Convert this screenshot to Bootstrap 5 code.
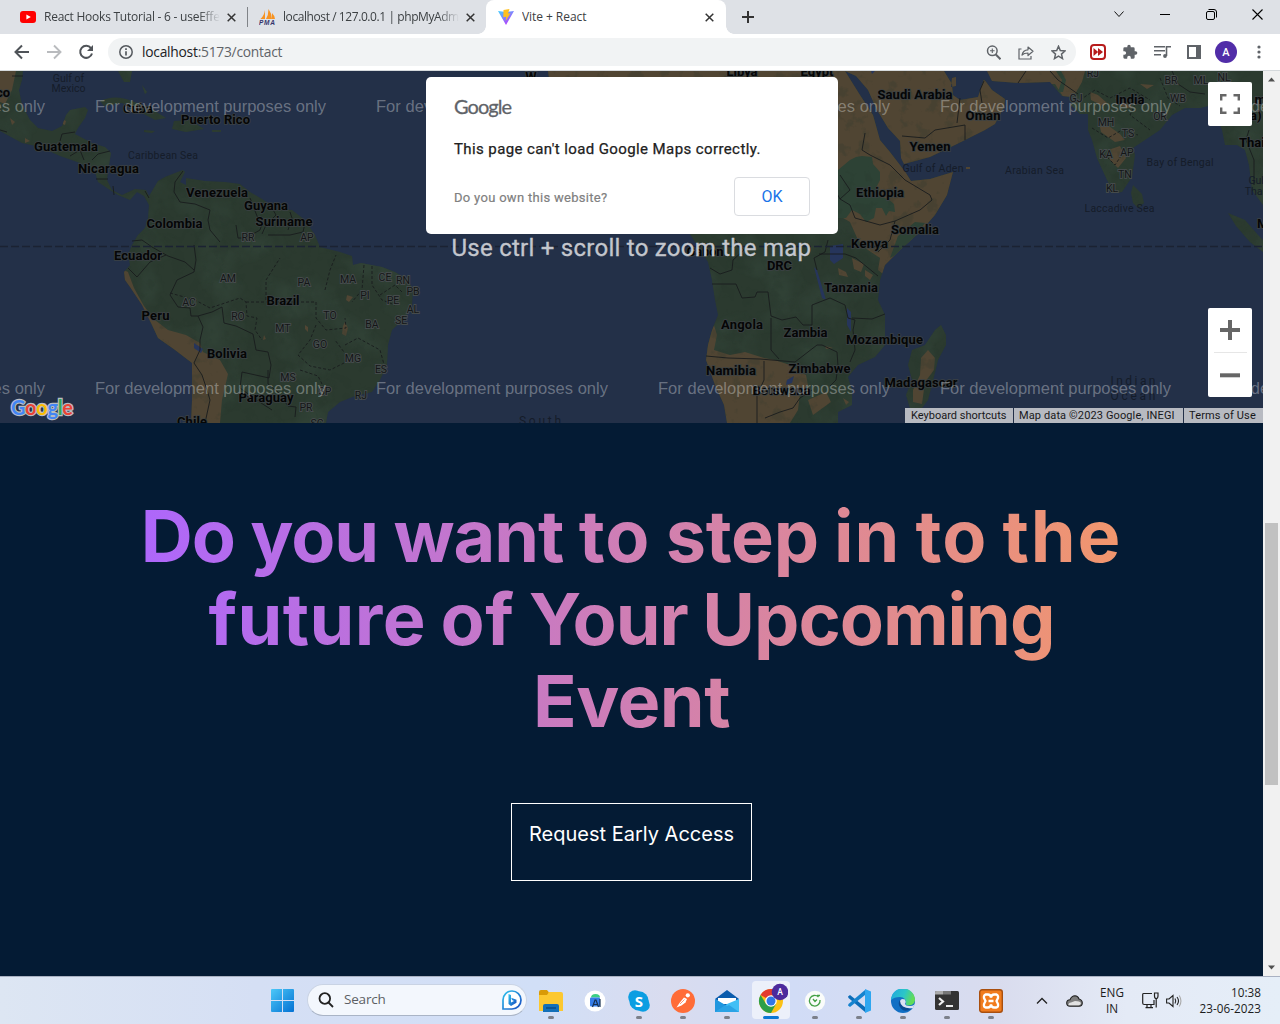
<!DOCTYPE html>
<html lang="en">
<head>
<meta charset="utf-8">
<meta name="viewport" content="width=device-width, initial-scale=1">
<title>Vite + React</title>
<link href="https://cdn.jsdelivr.net/npm/bootstrap@5.3.0/dist/css/bootstrap.min.css" rel="stylesheet">
<style>
body{width:1280px;height:1024px;overflow:hidden;font-family:"Open Sans","Noto Sans",sans-serif;background:#fff}
svg{display:block;flex:none}
.tabstrip{height:34px;background:#dee1e6;font-size:12px;color:#3c4043}
.tab-item{height:34px;white-space:nowrap}
.tab-label{overflow:hidden;line-height:34px}
.fade-end{-webkit-mask-image:linear-gradient(90deg,#000 88%,transparent);mask-image:linear-gradient(90deg,#000 88%,transparent)}
.tab-on{width:240px;background:#fff;border-radius:8px 8px 0 0;position:relative}
.tab-on::before,.tab-on::after{content:"";position:absolute;bottom:0;width:8px;height:8px}
.tab-on::before{left:-8px;background:radial-gradient(circle at 0 0,transparent 7.5px,#fff 8px)}
.tab-on::after{right:-8px;background:radial-gradient(circle at 100% 0,transparent 7.5px,#fff 8px)}
.tab-sep{width:1px;height:20px;background:#808388}
.toolbar{height:37px;border-bottom:1px solid #d5d9dc;background:#fff}
.omnibox{width:968px;height:28px;border-radius:14px;background:#f1f3f4;font-size:13.8px;color:#5f6368}
.omnibox b{font-weight:400;color:#202124}
.avatar{width:22px;height:22px;background:#512da8;color:#fff;font:500 11px Roboto,sans-serif}
.viewport-area{height:905px;background:#041b34}
.page-col{width:1263px}
.map-box{height:352px;position:relative;overflow:hidden;background:#233048}
.gm-dialog{position:absolute;left:426px;top:6px;width:412px;height:157px;background:#fff;border-radius:5px;padding:16px 28px 18px;font-family:Roboto,sans-serif}
.gm-brand{font:20px/26px Lato,sans-serif;color:#5f6368;letter-spacing:-.95px;-webkit-text-stroke:.3px #5f6368}
.gm-msg{font-size:15px;line-height:20px;color:#212121;letter-spacing:.4px;-webkit-text-stroke:.25px #212121}
.gm-own{font-size:13px;letter-spacing:.3px;color:#808080;-webkit-text-stroke:.2px #808080;padding-top:2px}
.gm-ok{width:76px;height:39px;border:1px solid #dadce0;border-radius:4px;background:#fff;color:#1a73e8;font-size:16px}
.gm-full{position:absolute;left:1208px;top:11px;width:44px;height:44px;background:#fff;border-radius:2px}
.gm-zoom{position:absolute;left:1208px;top:237px;width:44px;height:89px;background:#fff;border-radius:2px}
.gm-zoom i{height:1px;width:33px;background:#e6e6e6}
.gm-legal{position:absolute;right:0;bottom:0;height:15px;font:11px/15px Roboto,sans-serif;color:#17181a;gap:1px}
.gm-legal span{background:#b7bac1;white-space:nowrap;padding-left:6px}
.hero-title{margin-top:72px;font:700 72px/82.5px Inter,sans-serif;width:1003px;background:linear-gradient(90deg,#ae67fa 1.8%,#f49867 102.7%);-webkit-background-clip:text;background-clip:text;color:transparent;text-align:center}
.hero-line{display:block;white-space:nowrap;word-spacing:-1.3px;letter-spacing:-.55px}
.hero-line.second{word-spacing:-2px}
.k-tight{letter-spacing:-1px}
.k-wide{letter-spacing:1px}
.k-wider{letter-spacing:1.8px}
.k-soft{letter-spacing:.4px}
.k-snug{letter-spacing:-.3px}
.cta{width:241px;height:78px;border:1px solid #fff;color:#fff;margin-top:60px;padding-top:15px;font:400 20px/30px Inter,sans-serif;text-align:center;white-space:nowrap}
.scroll-col{width:17px;background:#f1f1f1}
.scroll-thumb{width:13px;height:262px;background:#c1c1c1;margin-top:441px}
.taskbar{height:48px;border-top:1px solid #a9b1c2;background:linear-gradient(90deg,#dde6f3,#d5dff4 20%,#d1dff7 42%,#d9dcef 52%,#d1dcf6 62%,#d9dcee 78%,#e4eaf6 88%,#e5eef8);color:#1b1b1b}
.pill{width:220px;height:32px;margin-top:-2px;border-radius:16px;background:#f3f7fd;border:1px solid #c9d3e4;border-bottom-color:#a9b4c6;font-size:13.5px;color:#5c5f64}
.app{width:44px;height:47px;position:relative}
.app::after{content:"";position:absolute;bottom:5px;left:19px;width:6px;height:3px;border-radius:2px;background:#7c808a}
.app.off::after{display:none}
.app.cur::before{content:"";position:absolute;left:3px;top:4px;width:38px;height:38px;border-radius:4px;background:#ecf0fa}
.app.cur::after{left:14px;width:16px;background:#0a78d4}
.app svg{position:relative}
.clock{font-size:11.7px;line-height:16px;letter-spacing:.05px;margin-top:-1px;white-space:nowrap}
</style>
<script src="https://cdn.jsdelivr.net/npm/bootstrap@5.3.0/dist/js/bootstrap.bundle.min.js"></script>
</head>
<body class="d-flex flex-column m-0">

<header class="tabstrip d-flex align-items-center">
  <div class="tab-item d-flex align-items-center" style="width:247px;padding-left:20px">
    <svg width="16" height="12" viewBox="0 0 16 12"><rect width="16" height="12" rx="3" fill="#f00"/><path d="M6.4 3.4v5.2L10.8 6z" fill="#fff"/></svg>
    <div class="tab-label fade-end ms-2" style="width:176px;letter-spacing:-.24px">React Hooks Tutorial - 6 - useEffect</div>
    <svg style="margin-left:7px" width="9" height="9" viewBox="0 0 9 9" stroke="#333" stroke-width="1.5"><path d="M.7.7l7.6 7.6M8.3.7L.7 8.3"/></svg>
  </div>
  <div class="tab-sep"></div>
  <div class="tab-item d-flex align-items-center" style="width:238px;padding-left:11px">
    <svg width="17" height="16" viewBox="0 0 17 16"><path d="M6 1v9H1.500Q5 7 6 1zM9.500 0Q13 5 13 10H7Q9.500 6 9.500 0zM13 4q3 3 3 6h-3z" fill="#f79322"/><text x="0" y="15.500" font-size="6.500" font-weight="bold" font-style="italic" font-family="Liberation Sans" fill="#34346b" textLength="16">PMA</text></svg>
    <div class="tab-label fade-end" style="width:176px;margin-left:7px;letter-spacing:-.42px">localhost / 127.0.0.1 | phpMyAdmin</div>
    <svg style="margin-left:7px" width="9" height="9" viewBox="0 0 9 9" stroke="#333" stroke-width="1.5"><path d="M.7.7l7.6 7.6M8.300.7L.7 8.300"/></svg>
  </div>
  <div class="tab-item tab-on d-flex align-items-center" style="padding-left:12px">
    <svg width="16" height="16" viewBox="0 0 16 16"><defs><linearGradient id="va" x1="0" y1="0" x2=".7" y2="1"><stop offset="0" stop-color="#41d1ff"/><stop offset="1" stop-color="#bd34fe"/></linearGradient></defs><path d="M0 2l8 1 8-1-8 14z" fill="url(#va)"/><path d="M5.500 1l6-1-1.500 4.500 2.500-.3L7.700 12l.6-4.300-3 .6z" fill="#ffc01f"/></svg>
    <div class="tab-label ms-2" style="width:183px;letter-spacing:-.06px">Vite + React</div>
    <svg width="9" height="9" viewBox="0 0 9 9" stroke="#333" stroke-width="1.5"><path d="M.7.7l7.6 7.6M8.300.7L.7 8.300"/></svg>
  </div>
  <svg style="margin-left:16px" width="12" height="12" viewBox="0 0 12 12" stroke="#333" stroke-width="2"><path d="M6 0v12M0 6h12"/></svg>
  <div class="ms-auto d-flex align-items-center" style="padding-right:17px;margin-top:-6px">
    <svg width="12" height="12" viewBox="0 0 12 12" fill="none" stroke="#111"><path d="M1.500 3.500L6 8.500l4.500-5"/></svg>
    <svg style="margin-left:35px" width="10" height="12" viewBox="0 0 10 12" stroke="#000"><path d="M0 6.500h10"/></svg>
    <svg style="margin-left:36px" width="11" height="11" viewBox="0 0 11 11" fill="none" stroke="#000"><rect x=".5" y="2.500" width="8" height="8" rx="1.500"/><path d="M2.500.5H8q2.500 0 2.500 2.500v5.500"/></svg>
    <svg style="margin-left:35px" width="11" height="11" viewBox="0 0 11 11" stroke="#000" stroke-width="1.100"><path d="M.5.5l10 10M10.500.5l-10 10"/></svg>
  </div>
</header>

<nav class="toolbar d-flex align-items-center">
  <svg style="margin-left:14px" width="16" height="16" viewBox="0 0 16 16" fill="none" stroke="#4f5358" stroke-width="2"><path d="M15 8H2M8 1.500L1.500 8 8 14.500"/></svg>
  <svg style="margin-left:16px" width="16" height="16" viewBox="0 0 16 16" fill="none" stroke="#b9bbbe" stroke-width="1.900"><path d="M1 8h13M8 1.500L14.500 8 8 14.500"/></svg>
  <svg style="margin-left:16px" width="16" height="16" viewBox="0 0 16 16" fill="none" stroke="#4f5358" stroke-width="2"><path d="M13 4.200A6 6 0 1 0 14 9.500"/><path d="M15 1v6H9z" fill="#4f5358" stroke="none"/></svg>
  <div class="omnibox d-flex align-items-center" style="margin-left:14px;padding:0 10px 0 11px">
    <svg width="14" height="14" viewBox="0 0 14 14" fill="none" stroke="#55595e" stroke-width="1.500"><circle cx="7" cy="7" r="6.200"/><path d="M7 6.200v4.300M7 3.300v1.600" stroke-width="1.700"/></svg>
    <span style="margin-left:9px;letter-spacing:-.24px"><b>localhost</b>:5173/contact</span>
    <div class="ms-auto d-flex align-items-center" style="gap:17px">
      <svg width="15" height="15" viewBox="0 0 15 15" fill="none" stroke="#5f6368" stroke-width="1.500"><circle cx="6.300" cy="5.800" r="4.800"/><path d="M9.800 9.500l4.700 4.700" stroke-width="2"/><path d="M4 5.800h4.600M6.300 3.500v4.600" stroke-width="1.100"/></svg>
      <svg width="16" height="15" viewBox="0 0 16 15" fill="none" stroke="#5f6368" stroke-width="1.200"><path d="M3.500 4H1v10h12v-3"/><path d="M4 10q1-5 6-5.200V2l5 4.300-5 4.200V8Q6 8 4 10z" stroke-linejoin="round"/></svg>
      <svg width="15" height="15" viewBox="0 0 15 15" fill="none" stroke="#5f6368" stroke-width="1.500"><path d="M7.500 1.300l1.800 4.300 4.700.4-3.500 3.100 1 4.500-4-2.400-4 2.400 1-4.500L1 6l4.700-.4z"/></svg>
    </div>
  </div>
  <svg style="margin-left:14px" width="16" height="16" viewBox="0 0 16 16"><rect x="1" y="1" width="14" height="14" rx="3" fill="#fff" stroke="#b71c1c" stroke-width="2"/><path d="M3.500 4l4.700 4-4.700 4zM8 4l5 4-5 4z" fill="#b71c1c"/></svg>
  <svg style="margin-left:16px" width="16" height="16" viewBox="0 0 24 24" fill="#5f6368"><path d="M20.500 11H19V7a2 2 0 0 0-2-2h-4V3.500a2.500 2.500 0 0 0-5 0V5H4a2 2 0 0 0-2 2v3.800h1.500a2.700 2.700 0 0 1 0 5.400H2V20a2 2 0 0 0 2 2h3.800v-1.500a2.700 2.700 0 0 1 5.400 0V22H17a2 2 0 0 0 2-2v-4h1.500a2.500 2.500 0 0 0 0-5z"/></svg>
  <svg style="margin-left:16px" width="17" height="14" viewBox="0 0 17 14" fill="none" stroke="#5f6368" stroke-width="1.600"><path d="M0 1.800h11M0 5.800h11M0 9.800h7M12.500 11V1.800H17"/><circle cx="11" cy="11" r="1.900" fill="#5f6368" stroke="none"/></svg>
  <svg style="margin-left:16px" width="14" height="14" viewBox="0 0 14 14"><path d="M0 0h14v14H0zM2 2v10h7V2z" fill="#5f6368" fill-rule="evenodd"/></svg>
  <div class="avatar rounded-circle d-flex align-items-center justify-content-center" style="margin-left:14px">A</div>
  <svg style="margin-left:20px" width="4" height="14" viewBox="0 0 4 14" fill="#5f6368"><circle cx="2" cy="2" r="1.600"/><circle cx="2" cy="7" r="1.600"/><circle cx="2" cy="12" r="1.600"/></svg>
</nav>

<main class="viewport-area d-flex">
  <div class="page-col d-flex flex-column align-items-center">
    <section class="map-box w-100">
      <svg width="1263" height="352" viewBox="0 71 1263 352">
        <defs>
          <path id="land" d="M0 71H23L22 80 19 90 22 105 30 120 38 128 52 131 62 126 66 115 70 110 85 107 88 110 85 118 78 128 75 134 92 143 105 147 111 153 109 165 107 180 112 190 122 195 135 189 146 190 149 196 158 181 165 177 175 173 183 170 185 172 180 182 186 185 186 178 205 181 225 182 240 184 250 192 262 199 275 208 292 210 305 220 315 235 320 247 340 252 352 256 353 265 361 263 382 267 395 272 408 280 413 290 412 305 405 318 392 330 388 345 387 365 380 380 372 392 355 396 340 402 328 412 326 423H191L192 400 192 363 175 350 158 338 152 325 142 305 130 287 125 280 124 272 130 265 128 255 132 245 138 235 145 228 148 218 149 205 144 196 137 192 130 200 118 195 110 190 98 182 95 172 80 163 60 156 40 147 22 143 0 131Z
          M118 71H132L130 82 124 82ZM100 101Q115 94 132 101L150 108 166 118 155 120 140 112 122 103 104 106ZM174 121L190 120 204 129 186 132 172 129ZM144 130L155 131 152 133 144 132ZM212 130H221V132H212ZM142 85L147 92 145 94Z
          M548 71H845L860 95 873 115 880 140 890 152 900 165 906 173 911 181 930 179 953 172 947 195 935 215 920 232 900 250 885 265 880 280 878 300 885 315 885 345 875 357 858 365 848 377 852 390 852 405 838 412 838 423H727L724 405 715 385 706 360 708 345 712 330 718 315 715 300 712 280 708 262 700 250 690 234 680 200 560 160Z
          M845 71L856 76 868 90 877 110 888 128 900 141 901 158 904 164 930 157 955 145 965 140 985 130 995 124 1004 107 1005 99 992 90 984 79 978 97 960 100 953 95 952 84 944 71Z
          M952 78L956 77 956 86 951 87ZM987 71L992 81 1018 83 1050 82 1062 96 1073 97 1071 105 1080 114 1088 114 1088 130 1092 140 1097 158 1107 180 1114 193 1122 192 1132 177 1135 155 1133 148 1145 140 1160 130 1172 115 1185 108 1200 108 1212 105 1222 130 1225 145 1237 145 1245 150 1249 165 1252 190 1263 205V71Z
          M1133 185L1142 194 1144 203 1138 208 1133 203 1131 193ZM1228 213L1245 220 1258 235 1263 240V252L1250 242 1236 226Z
          M941 325L946 335 946 345 938 360 932 385 928 400 922 408 910 408 906 395 912 380 908 365 912 350 925 345 935 330Z"/>
          <clipPath id="lc"><use href="#land"/></clipPath>
          <filter id="mot" x="0" y="0" width="100%" height="100%" color-interpolation-filters="sRGB"><feTurbulence type="fractalNoise" baseFrequency=".025" numOctaves="4" seed="8"/><feColorMatrix values="0 0 0 0 .20  0 0 0 0 .27  0 0 0 0 .225  3 0 0 0 -1.3"/></filter>
          <filter id="spk" x="0" y="0" width="100%" height="100%" color-interpolation-filters="sRGB"><feTurbulence type="fractalNoise" baseFrequency=".07" numOctaves="4" seed="3"/><feColorMatrix values="0 0 0 0 .16  0 0 0 0 .22  0 0 0 0 .18  8 0 0 0 -4.6"/></filter>
        </defs>
        <rect y="71" width="1263" height="352" fill="#233048"/>
        <use href="#land" fill="#2b3a2f"/>
        <g clip-path="url(#lc)">
          <rect y="71" width="1263" height="352" filter="url(#mot)" opacity=".65"/>
          <g fill="#504533">
            <path d="M0 71H16L12 90 5 104 0 102ZM124 270L128 272 134 288 144 306 155 320 168 330 186 335 200 343 203 352 220 360 228 374 222 400 220 423H185V360L150 338 124 300Z"/>
            <path d="M540 71H960L1010 90 1005 130 905 168 955 172 940 225 895 262 888 278 878 270 880 258 868 250 858 240 850 222 838 215V100H560ZM985 71H1085L1082 82 1074 96 1064 98 1055 84 990 84Z"/>
            <path d="M714 325L717 335 714 350 730 355 745 352 764 358 775 360 790 365 806 375 808 385 800 393 798 410 790 423H722L700 360ZM928 350L935 358 934 370 925 382 922 404 913 402 913 390 920 375 921 358Z"/>
            <path d="M345 322l3 6-2 8-4-2 1-8zM347 295l6 2-4 5-3-2zM305 325l3 2 0 5-3-3zM264 335l2 4-3 1zM60 118l6 3-1 4-5-2zM10 118l5 4-3 3zM25 138l5 3-5 2z"/>
            <path d="M1098 118l8 6 14 10 5 6-10 2-14-10zM1108 150l12-4 6 12-8 10-8-8zM1090 92l8 3 9 8-4 3-12-6zM1140 84l14 1-7 4zM1115 98l10 3 8 8-12-3z"/>
            <path d="M838 268l8 4 2 5-9-2zM852 258l12 6-3 8-7-3zM865 270l8 5-3 5-5-4zM808 400l18-8 5 10-18 13zM843 398l6 4-3 3zM825 346l8 2-7 1z"/>
          </g>
          <g fill="#2d4235">
            <path d="M838 170L850 160 856 157 862 156 872 157 873 164 880 172 880 180 876 188 880 197 888 199 894 204 895 212 889 211 886 216 882 208 876 208 874 218 866 222 860 214 852 210 846 218 838 218ZM905 250L925 223 915 222 898 236 890 258ZM1056 71L1062 80 1058 92 1063 92 1066 80 1061 71Z"/>
          </g>
          <rect x="120" y="71" width="1143" height="352" filter="url(#spk)" opacity=".22"/>
          <g fill="#26355b"><path d="M830 246L843 244 843 258 834 264 830 260ZM814 267L817 270 826 300 822 298ZM847 308L851 312 851 332 847 325ZM194 343L203 349 201 353 194 348ZM787 380l7-4-2 7-6 2zM870 68L875 71 872 74Z"/></g>
        </g>
        <path d="M966 167h4v2h-4z" fill="#504533"/>
        <g fill="none" stroke="#181c1d" stroke-width=".9" stroke-linejoin="round">
          <path d="M183 171L175 182 174 192 180 202 195 204 210 210 208 220 210 230 220 242M132 241L142 240 152 247 168 256 185 262 194 270M128 268L137 277 150 262 166 255M194 245L196 260 194 272 177 280 170 295 178 307 190 308 191 316 198 316 203 327 200 340 200 350 194 363 202 375 207 390 210 400 205 423M198 316L212 312 222 307 224 323 236 326 253 334 256 350 268 352 271 365 269 378 242 372 240 388 258 401 272 410M268 370L268 384 278 392 288 406 296 407 295 417M236 225L238 238 246 238 260 230 262 224 257 216 250 198M272 208L276 215 266 225 262 234M290 212L292 218 288 230M305 223L303 232 290 235 268 235M60 141L62 134 75 132M70 156L80 150 84 160M92 160L98 154 110 151M96 179H108M113 186L114 195M145 191L149 198M0 130l7 2M12 76h11"/>
          <path d="M712 284L736 284 742 298 755 297 757 292 768 292 771 316 782 320 796 317 803 325 812 325 812 305 830 298 845 305 848 318 855 320M771 318V350L779 359M706 356L728 358 760 359 795 362 817 345 822 345 837 352 838 366 836 380 830 386M764 361V380L757 395 757 423M765 418L780 412 793 408 800 398 812 390M852 318L872 319 885 314M819 254H845L856 258 878 276M817 270L814 258 825 252 828 240M855 320L853 330 855 350 850 362M710 268L720 274 732 270 733 260 744 250 735 240M840 175L850 190 840 199 850 205 855 218 880 225 895 221M870 155L890 165 900 175 905 180 930 195 932 200 920 210 895 221 890 240 878 252M865 133L862 150 870 155M835 190l5 9M902 136L925 138 935 130 965 125 965 140M957 123L960 98M984 81L980 90 982 103M1050 71L1058 80 1078 94M1018 83L1026 71M1172 71L1178 84 1190 92 1205 94M1249 130L1246 140 1254 160 1254 185"/>
          <path stroke-dasharray="3 2" d="M170 293L195 300 210 308 222 304 240 298 246 302 247 316 257 318 255 330 262 340M246 302H316L316 318 326 330 346 328 345 318M266 300L266 280 280 258M325 290L330 270 336 255M364 265L362 290 352 302M372 266V285L382 300 395 305M316 325L310 340 298 355 310 366 330 370 350 360 335 340M380 295L395 285 402 292M345 345L358 338 380 350 385 368M300 370L318 376 325 390M1080 100L1095 90 1110 98 1130 88 1150 100M1092 128L1108 138 1122 130 1138 135M1100 150L1115 165 1125 150M1160 78L1168 98 1180 106M1140 95l-10 20 20 15"/>
        </g>
        <path d="M0 246.500H1263" stroke="#1b2232" stroke-width="1.500" stroke-dasharray="8 3"/>

        <g font-family="Roboto,sans-serif" font-size="10.500" fill="#151c29" text-anchor="middle">
          <text x="68.500" y="82">Gulf of</text><text x="68.500" y="92">Mexico</text><text x="163" y="159" textLength="70">Caribbean Sea</text>
          <text x="933" y="172" textLength="61">Gulf of Aden</text><text x="1034.500" y="174" textLength="59">Arabian Sea</text><text x="1180" y="165.500" textLength="67">Bay of Bengal</text><text x="1119.500" y="212" textLength="70">Laccadive Sea</text><text x="1258" y="184">Gulf</text><text x="1259" y="195">Thaila</text>
          <text x="1133" y="385" font-size="12" textLength="45">Indian</text><text x="1133" y="400" font-size="12" textLength="45">Ocean</text><text x="540" y="425" font-size="12" textLength="42">South</text>
        </g>
        <g font-family="Roboto,sans-serif" font-size="10.500" fill="#141617" stroke="#454b4c" stroke-width="1.800" paint-order="stroke" text-anchor="middle">
          <text x="248" y="241">RR</text><text x="307" y="241">AP</text><text x="228" y="282">AM</text><text x="304" y="286">PA</text><text x="348" y="283">MA</text><text x="385" y="281">CE</text><text x="403" y="284">RN</text><text x="413" y="295">PB</text><text x="365" y="299">PI</text><text x="393" y="304">PE</text><text x="413" y="313">AL</text><text x="401" y="324">SE</text><text x="189" y="306">AC</text><text x="238" y="320">RO</text><text x="330" y="319">TO</text><text x="372" y="328">BA</text><text x="283" y="332">MT</text><text x="320" y="348">GO</text><text x="353" y="362">MG</text><text x="381" y="373">ES</text><text x="288" y="381">MS</text><text x="325" y="395">SP</text><text x="361" y="399">RJ</text><text x="306" y="411">PR</text><text x="317" y="427">SC</text>
          <text x="1093" y="77">RJ</text><text x="1171" y="84">BR</text><text x="1201" y="84">ML</text><text x="1224" y="81">NL</text><text x="1076" y="102">GJ</text><text x="1178" y="102">WB</text><text x="1160" y="120">OR</text><text x="1106" y="126">MH</text><text x="1128" y="137">TS</text><text x="1106" y="158">KA</text><text x="1127" y="156">AP</text><text x="1125" y="178">TN</text><text x="1112" y="192">KL</text>
        </g>
        <g font-family="Roboto,sans-serif" font-size="13" font-weight="700" fill="#050606" stroke="#3b4144" stroke-width="1.600" paint-order="stroke" text-anchor="middle" lengthAdjust="spacingAndGlyphs">
          <text x="3" y="97">co</text><text x="138" y="113">Cuba</text><text x="215.500" y="124" textLength="69">Puerto Rico</text><text x="66" y="151" textLength="64">Guatemala</text><text x="108.500" y="173" textLength="61">Nicaragua</text><text x="217" y="197" textLength="62">Venezuela</text><text x="266" y="210" textLength="44">Guyana</text><text x="284" y="226" textLength="57">Suriname</text><text x="174.500" y="228" textLength="56">Colombia</text><text x="138" y="260" textLength="48">Ecuador</text><text x="155.500" y="320" textLength="28">Peru</text><text x="283" y="305" textLength="33">Brazil</text><text x="227" y="358" textLength="40">Bolivia</text><text x="266" y="402" textLength="55">Paraguay</text><text x="192" y="426" textLength="30">Chile</text>
          <text x="531" y="81">W</text><text x="742" y="76">Libya</text><text x="817" y="76">Egypt</text><text x="915" y="99" textLength="75">Saudi Arabia</text><text x="983" y="120" textLength="35">Oman</text><text x="930" y="151" textLength="41">Yemen</text><text x="880" y="197" textLength="48">Ethiopia</text><text x="915" y="234" textLength="48">Somalia</text><text x="869.500" y="248" textLength="37">Kenya</text><text x="705" y="256" textLength="37">Gabon</text><text x="779.500" y="270" textLength="25">DRC</text><text x="851" y="292" textLength="54">Tanzania</text><text x="742" y="329" textLength="42">Angola</text><text x="805.500" y="337" textLength="44">Zambia</text><text x="884.500" y="344" textLength="77">Mozambique</text><text x="731" y="375" textLength="50">Namibia</text><text x="819.500" y="373" textLength="62">Zimbabwe</text><text x="781.500" y="395" textLength="58">Botswana</text><text x="921" y="387" textLength="73">Madagascar</text><text x="1130" y="104" textLength="29">India</text><text x="1266" y="104">mar</text><text x="1250" y="120" text-anchor="start">a)</text><text x="1239" y="147" text-anchor="start">Thailand</text><text x="1257" y="228" text-anchor="start">Ma</text>
        </g>
        <g font-family="Liberation Sans,sans-serif" font-size="16.500" fill="#fff" fill-opacity=".33">
          <text x="-187" y="112" textLength="232">For development purposes only</text><text x="95" y="112" textLength="231">For development purposes only</text><text x="376" y="112" textLength="232">For development purposes only</text><text x="658" y="112" textLength="232">For development purposes only</text><text x="940" y="112" textLength="231">For development purposes only</text><text x="1221.500" y="112" textLength="231">For development purposes only</text>
          <text x="-187" y="394" textLength="232">For development purposes only</text><text x="95" y="394" textLength="231">For development purposes only</text><text x="376" y="394" textLength="232">For development purposes only</text><text x="658" y="394" textLength="232">For development purposes only</text><text x="940" y="394" textLength="231">For development purposes only</text><text x="1221.500" y="394" textLength="231">For development purposes only</text>
        </g>
        <text x="451.500" y="256" font-family="Roboto,sans-serif" font-size="24" fill="#c3c6cd" stroke="#c3c6cd" stroke-width=".3" textLength="359.500">Use ctrl + scroll to zoom the map</text>
        <text x="11" y="415" font-family="Lato,sans-serif" font-size="20" font-weight="700" textLength="62" stroke="#b9bcc2" stroke-width="2.400" paint-order="stroke"><tspan fill="#4285f4">G</tspan><tspan fill="#ea4335">o</tspan><tspan fill="#fbbc04">o</tspan><tspan fill="#4285f4">g</tspan><tspan fill="#34a853">l</tspan><tspan fill="#ea4335">e</tspan></text>
      </svg>
      <div class="gm-legal d-flex"><span style="width:108px">Keyboard shortcuts</span><span style="width:169px;letter-spacing:.12px;padding-left:5px">Map data ©2023 Google, INEGI</span><span style="width:79px;letter-spacing:.15px;padding-left:5px">Terms of Use</span></div>
      <div class="gm-full d-flex align-items-center justify-content-center"><svg width="20" height="20" viewBox="0 0 20 20" fill="none" stroke="#666" stroke-width="2.400"><path d="M1.200 6.500V1.200h5.300M13.500 1.200h5.300v5.300M18.800 13.500v5.300h-5.300M6.500 18.800H1.200v-5.300"/></svg></div>
      <div class="gm-zoom d-flex flex-column align-items-center">
        <svg width="44" height="44" viewBox="0 0 44 44" stroke="#666" stroke-width="4"><path d="M12 22h20M22 12v20"/></svg><i></i>
        <svg width="44" height="44" viewBox="0 0 44 44" stroke="#666" stroke-width="4"><path d="M12 22.300h20"/></svg>
      </div>
      <div class="gm-dialog d-flex flex-column">
        <div class="gm-brand">Google</div>
        <div class="gm-msg" style="margin-top:20px">This page can't load Google Maps correctly.</div>
        <div class="d-flex align-items-center justify-content-between mt-auto">
          <span class="gm-own">Do you own this website?</span>
          <button class="gm-ok p-0">OK</button>
        </div>
      </div>
    </section>
    <h1 class="hero-title mb-0"><span class="hero-line"><span class="k-tight">Do</span> <span class="k-tight">you</span> <span class="k-tight">want</span> <span class="k-wide">to</span> <span class="k-snug">step</span> <span class="k-wide">in</span> <span class="k-wide">to</span> <span class="k-wider">the</span></span><span class="hero-line second"><span class="k-soft">future</span> <span class="k-soft">of</span> <span class="k-tight">Your</span> <span class="k-tight">Upcoming</span></span><span class="hero-line">Event</span></h1>
    <div class="cta">Request Early Access</div>
  </div>
  <aside class="scroll-col d-flex flex-column align-items-center">
    <svg style="margin-top:6px" width="7" height="5" viewBox="0 0 7 5"><path d="M0 4.500L3.500.5 7 4.500z" fill="#505050"/></svg>
    <div class="scroll-thumb"></div>
    <svg class="mt-auto" style="margin-bottom:6px" width="7" height="5" viewBox="0 0 7 5"><path d="M0 .5L3.500 4.500 7 .5z" fill="#505050"/></svg>
  </aside>
</main>

<footer class="taskbar d-flex align-items-center">
  <div class="app off d-flex align-items-center justify-content-center" style="margin-left:260px"><svg width="23" height="23" viewBox="0 0 23 23"><defs><linearGradient id="wn" gradientUnits="userSpaceOnUse" x1="0" y1="0" x2="23" y2="23"><stop offset="0" stop-color="#4cc8f8"/><stop offset="1" stop-color="#0371d3"/></linearGradient></defs><path d="M0 1q0-1 1-1h10v11H0zM12 0h10q1 0 1 1v10H12zM0 12h11v11H1q-1 0-1-1zM12 12h11v10q0 1-1 1H12z" fill="url(#wn)"/></svg></div>
  <div class="pill d-flex align-items-center" style="margin-left:3px;margin-right:2px;padding:0 4px 0 10px">
    <svg width="16" height="16" viewBox="0 0 16 16" fill="none" stroke="#222" stroke-width="1.800"><circle cx="6.800" cy="6.500" r="5.300"/><path d="M10.500 10.500l4.500 4.500"/></svg>
    <span style="margin-left:10px;letter-spacing:-.2px">Search</span>
    <svg class="ms-auto" width="20" height="20" viewBox="0 0 20 20"><defs><linearGradient id="bg" x1="0" y1="0" x2="1" y2="1"><stop offset="0" stop-color="#2fc3ee"/><stop offset="1" stop-color="#174ac0"/></linearGradient></defs><path d="M1 19V10a9 9 0 1 1 9 9z" fill="#fff" stroke="url(#bg)" stroke-width="1.700"/><path d="M6.500 4l2.500 1v7.500l3-1.500-2-1-.8-2.200 5.300 2v3L9 16l-2.500-2z" fill="url(#bg)"/></svg>
  </div>
  <div class="app d-flex align-items-center justify-content-center"><svg width="24" height="22" viewBox="0 0 24 22"><path d="M0 2q0-2 2-2h6l2 2.500V7H0z" fill="#d99a07"/><path d="M0 5h8l2-3h12q2 0 2 2v17H0z" fill="#fcc830"/><path d="M4 22v-6q0-2 2-2h12q2 0 2 2v6z" fill="#1470b8"/><path d="M7 18h10" stroke="#0a4b86" stroke-width="1.500"/></svg></div>
  <div class="app off d-flex align-items-center justify-content-center"><svg width="22" height="22" viewBox="0 0 22 22"><circle cx="11" cy="11" r="10.500" fill="#fff"/><path d="M7 7.500a4.500 3.500 0 0 1 9 0z" fill="#3dcf84"/><rect x="6" y="7.500" width="10" height="9" rx="1" fill="#357de8"/><path d="M8.500 17l2.500-7h1l2.500 7M9.500 14.500h4M16 9v8" stroke="#17304e" stroke-width="1.200" fill="none"/></svg></div>
  <div class="app d-flex align-items-center justify-content-center"><svg width="22" height="22" viewBox="0 0 22 22"><g fill="#0b9ee2"><circle cx="7" cy="7" r="6.800"/><circle cx="15" cy="15" r="6.800"/><circle cx="11" cy="11" r="9.700"/></g><text x="11" y="16.500" font-family="Open Sans" font-weight="700" font-size="15" fill="#fff" text-anchor="middle">S</text></svg></div>
  <div class="app d-flex align-items-center justify-content-center"><svg width="24" height="24" viewBox="0 0 24 24"><circle cx="12" cy="12" r="12" fill="#ff6c37"/><circle cx="16.800" cy="6.300" r="2.100" fill="#fff"/><path d="M5.500 18.500l3-4.500 4.500-5.500 3 1.500-1.500 3.500-4 3z" fill="#fff"/><path d="M9 15l4.500-4.500" stroke="#ff6c37" stroke-width=".7"/></svg></div>
  <div class="app d-flex align-items-center justify-content-center"><svg width="24" height="22" viewBox="0 0 24 22"><path d="M0 9L12 0l12 9-12 8z" fill="#0b5cad"/><path d="M3 8h18v6H3z" fill="#fff"/><path d="M0 9l12 7 12-7v13H0z" fill="#28a5e8"/><path d="M0 22l12-8 12-5v13z" fill="#41bff5"/><path d="M0 9l12 7 2-1L24 22H0z" fill="#1687d5" opacity=".5"/></svg></div>
  <div class="app cur d-flex align-items-center justify-content-center"><svg width="34" height="38" viewBox="0 0 34 38"><g transform="translate(5 7)"><circle cx="12" cy="12" r="12" fill="#fbc116"/><path d="M1.600 6A12 12 0 0 1 22.400 6L12 6.600 12 12z" fill="#e33b2e"/><path d="M1.600 6A12 12 0 0 0 12 24l5-9-10 0z" fill="#2b9f48"/><circle cx="12" cy="12" r="5.800" fill="#fff"/><circle cx="12" cy="12" r="4.500" fill="#3077e8"/></g><circle cx="26" cy="10" r="8.300" fill="#4c2a9c"/><text x="26" y="13" font-family="Roboto" font-size="8.500" font-weight="500" fill="#fff" text-anchor="middle">A</text></svg></div>
  <div class="app d-flex align-items-center justify-content-center"><svg width="22" height="22" viewBox="0 0 22 22"><circle cx="11" cy="11" r="10.200" fill="#fafcfa"/><path d="M14.500 7A5.300 5.300 0 1 0 16 10M9 9l2 2.500 2-2M13 5.500h3" fill="none" stroke="#46a147" stroke-width="1.300"/></svg></div>
  <div class="app d-flex align-items-center justify-content-center"><svg width="24" height="24" viewBox="0 0 24 24"><path d="M1 7.500L3 6l15 12v5L1.500 9z" fill="#0b6cb8"/><path d="M1 16.500L3 18 18 6V1L1.500 15z" fill="#1583cf"/><path d="M18 0l6 2.500v19L18 24z" fill="#2ea6f0"/></svg></div>
  <div class="app d-flex align-items-center justify-content-center"><svg width="24" height="24" viewBox="0 0 24 24"><defs><linearGradient id="eg" x1="0" y1="0" x2="1" y2=".3"><stop offset="0" stop-color="#1fa6e0"/><stop offset=".6" stop-color="#2cc6c8"/><stop offset="1" stop-color="#62dc58"/></linearGradient></defs><circle cx="12" cy="12" r="12" fill="#116fc4"/><path d="M0 11A12 12 0 0 1 24 11.500Q23 16.500 17 16.500 14 16 15 13.500 15 8.500 9 8 3 8 0 11z" fill="url(#eg)"/><path d="M9 11Q6 15 10 19.500T21 19.500Q18 20 15 18.500T9 11z" fill="#0a4a92"/><path d="M9 12Q10 9 14 10.500 15.500 13 14 15 15 18 22 16.500L24 15 22 19Q16 20 12 17.500 9 15 9 12z" fill="#dbe2f3"/></svg></div>
  <div class="app d-flex align-items-center justify-content-center"><svg width="24" height="19" viewBox="0 0 24 19"><rect width="24" height="19" rx="1.500" fill="#333"/><path d="M0 3.500V1.500Q0 0 1.500 0H8v3.500z" fill="#aaa"/><path d="M8 0h8v3.500H8z" fill="#777"/><path d="M4 7l4 3.500L4 14" fill="none" stroke="#eee" stroke-width="2.200"/><path d="M11 15h7" stroke="#fff" stroke-width="1.800"/></svg></div>
  <div class="app d-flex align-items-center justify-content-center"><svg width="24" height="24" viewBox="0 0 24 24"><rect x=".7" y=".7" width="22.600" height="22.600" rx="2.500" fill="#f17c1e" stroke="#a94f0e" stroke-width="1.400"/><path d="M6.500 5.500h2.500q2.500 0 3 3 .5-3 3-3h2.500q2 1 1.500 3.500L17.500 12l1.500 3q.5 3-1.500 3.500H15q-2.500 0-3-3-.5 3-3 3H6.500Q4.500 18 5 15l1.500-3L5 9q-.5-2.500 1.500-3.500zM9.500 12h5" fill="none" stroke="#fff" stroke-width="2.300"/></svg></div>
  <div class="ms-auto d-flex align-items-center" style="padding-right:19px">
    <svg width="12" height="8" viewBox="0 0 12 8" fill="none" stroke="#222" stroke-width="1.300"><path d="M1 6.500l5-5 5 5"/></svg>
    <svg style="margin-left:18px" width="17" height="12" viewBox="0 0 17 12"><path d="M4 11.300Q.7 11 .7 8T4 4.800Q5.500 1 9 .8 12 .8 13 4 16.300 5 16.300 8T13 11.300z" fill="#7d7d7d" stroke="#222" stroke-width="1.100"/><path d="M2.500 10.300Q2 8 5 7.500L9 6q5 0 6 2-.5 2.300-2.500 2.300z" fill="#e2e2e2"/></svg>
    <div class="clock text-center" style="margin-left:16px;width:26px">ENG<br>IN</div>
    <svg style="margin-left:17px" width="17" height="17" viewBox="0 0 17 17" fill="none" stroke="#222" stroke-width="1.200"><path d="M10 1.500H1.500Q.7 1.500.7 3v8q0 1.500 1.500 1.500H12V8M5 12.500v3M9 12.500v3M3.500 15.700H11M12.500 1v3q0 2.500 1.700 2.500T16 4V1zM14.200 6.500v9"/></svg>
    <svg style="margin-left:7px" width="16" height="14" viewBox="0 0 16 14" fill="none" stroke="#222" stroke-width="1.100"><path d="M.6 5v4H3l4 3.500v-11L3 5zM9 4.500q1.500 2.500 0 5M11 3q3 4 0 8"/><path d="M13.200 1.500q3.500 5.500 0 11" stroke="#aaa"/></svg>
    <div class="clock text-end" style="margin-left:16px;width:63px">10:38<br>23-06-2023</div>
  </div>
</footer>
</body>
</html>
